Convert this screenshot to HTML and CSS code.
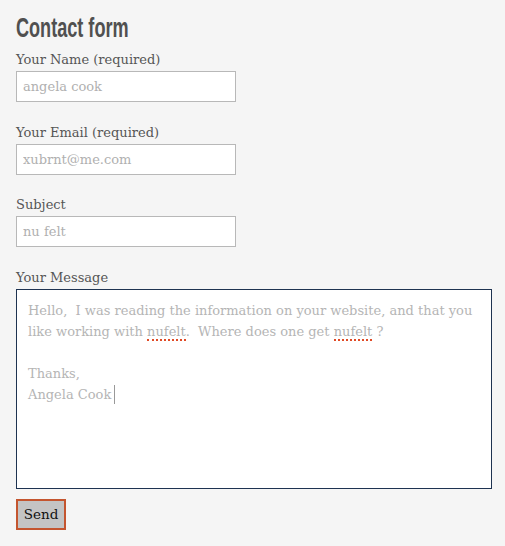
FILE: index.html
```html
<!DOCTYPE html>
<html lang="en">
<head>
    <meta charset="UTF-8">
    <meta name="viewport" content="width=device-width, initial-scale=1.0">
    <title>Contact form</title>
    <link rel="stylesheet" href="styles.css">
</head>
<body>
    <div class="page">
        <h1><span>Contact form</span></h1>
        <form class="contact-form">
            <div class="field">
                <label for="name">Your Name (required)</label>
                <input type="text" id="name" placeholder="angela cook">
            </div>
            <div class="field">
                <label for="email">Your Email (required)</label>
                <input type="text" id="email" placeholder="xubrnt@me.com">
            </div>
            <div class="field">
                <label for="subject">Subject</label>
                <input type="text" id="subject" placeholder="nu felt">
            </div>
            <div class="field last">
                <label>Your Message</label>
                <!-- textarea with focus + spellcheck marks -->
                <div class="message">
                    <p>Hello,&nbsp; I was reading the information on your website, and that you like working with <span class="typo">nufelt</span>.&nbsp; Where does one get <span class="typo">nufelt</span> ?</p>
                    <p>&nbsp;</p>
                    <p>Thanks,</p>
                    <p>Angela Cook<span class="caret"></span></p>
                </div>
            </div>
            <button type="button" class="send-btn">Send</button>
        </form>
    </div>
</body>
</html>
```

FILE: styles.css
```css
* {
    margin: 0;
    padding: 0;
    box-sizing: border-box;
}
body {
    background-color: #f5f5f5;
    color: #555;
    font-family: "DejaVu Serif", serif;
}
.page {
    padding: 12px 14px 16px 16px;
}
h1 {
    font-family: "Liberation Sans", sans-serif;
    font-weight: bold;
    font-size: 27px;
    line-height: 32px;
    color: #505050;
    margin-bottom: 6px;
}
h1 span {
    display: inline-block;
    transform: scaleX(0.67);
    transform-origin: left center;
}
.field {
    margin-bottom: 20.67px;
}
.field.last {
    margin-bottom: 10px;
}
label {
    display: block;
    font-size: 13px;
    line-height: 20px;
    margin-bottom: 1px;
}
input {
    display: block;
    width: 220px;
    height: 31px;
    padding: 0 6px;
    border: 1px solid #b8b8b8;
    background: white;
    font-family: "DejaVu Serif", serif;
    font-size: 13px;
    color: #555;
}
input::placeholder {
    color: #b0b0b0;
}
.message {
    width: 476px;
    height: 200px;
    border: 1px solid #1e3351;
    background: white;
    padding: 10px 11px;
    font-size: 13px;
    line-height: 21px;
    color: #b5b5b5;
}
.typo {
    border-bottom: 2px dotted #e04a26;
}
.caret {
    display: inline-block;
    width: 1px;
    height: 19px;
    margin-left: 3px;
    vertical-align: -5px;
    background: #999;
}
.send-btn {
    display: block;
    width: 50px;
    height: 31px;
    background: #c4c4c4;
    border: 2px solid #c4552f;
    font-family: "DejaVu Serif", serif;
    font-size: 13.5px;
    color: #111;
    cursor: pointer;
}
```
